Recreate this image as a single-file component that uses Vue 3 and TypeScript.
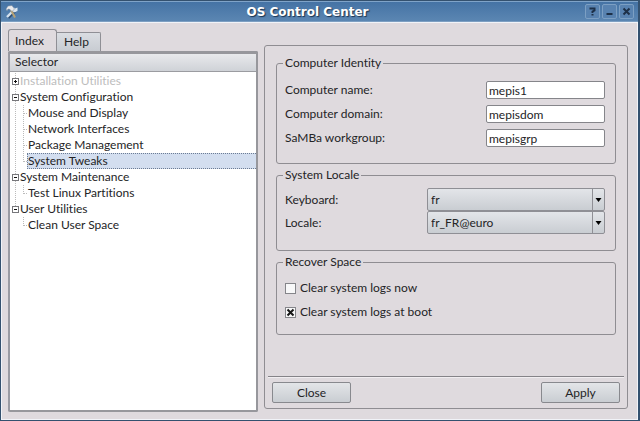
<script setup lang="ts">
import { reactive, ref } from 'vue'

interface TreeGroup {
  name: string
  open: boolean
  disabled?: boolean
  items: string[]
}

const groups = reactive<TreeGroup[]>([
  { name: 'Installation Utilities', open: false, disabled: true, items: [] },
  {
    name: 'System Configuration',
    open: true,
    items: ['Mouse and Display', 'Network Interfaces', 'Package Management', 'System Tweaks'],
  },
  { name: 'System Maintenance', open: true, items: ['Test Linux Partitions'] },
  { name: 'User Utilities', open: true, items: ['Clean User Space'] },
])

const selected = ref('System Tweaks')
const tab = ref('Index')
const tabs = ['Index', 'Help']

const identity = reactive([
  { id: 'name', label: 'Computer name:', value: 'mepis1' },
  { id: 'domain', label: 'Computer domain:', value: 'mepisdom' },
  { id: 'workgroup', label: 'SaMBa workgroup:', value: 'mepisgrp' },
])

const locale = reactive([
  { id: 'keyboard', label: 'Keyboard:', value: 'fr', options: ['fr'] },
  { id: 'locale', label: 'Locale:', value: 'fr_FR@euro', options: ['fr_FR@euro'] },
])

const cleanup = reactive([
  { label: 'Clear system logs now', checked: false },
  { label: 'Clear system logs at boot', checked: true },
])
</script>

<template>
  <div class="window">
    <header class="titlebar">
      <svg class="app-icon" viewBox="0 0 14 14" aria-hidden="true">
        <path d="M3 12.5 L11 4.5" stroke="#2b4d75" stroke-width="3.5" />
        <path d="M2 12 L10 4" stroke="#d5e2ef" stroke-width="2.4" />
        <path d="M8 5 L8.5 2 L10 3.5 L12.5 2.5 L12.5 6 L9.5 7.5Z" fill="#dce7f2" />
        <path d="M6 5 L10 12.5" stroke="#b8a274" stroke-width="2" />
        <path d="M1 4 L3 1 L7 .5 L9.5 4 L7 6.5 L5 4.5 L3 4 L2 6Z" fill="#ebebed" stroke="#6c819b" stroke-width=".5" />
      </svg>
      <h1>OS Control Center</h1>
      <div class="window-buttons">
        <button type="button" aria-label="What's this">
          <svg viewBox="0 0 13 13"><path d="M4.5 4.5 V3.5 H8.5 V5.5 L6.5 6.5 V8 M6.5 9 V10.5" /></svg>
        </button>
        <button type="button" aria-label="Minimize">
          <svg viewBox="0 0 13 13"><path d="M3.5 9 H9.5" /></svg>
        </button>
        <button type="button" aria-label="Close window">
          <svg viewBox="0 0 13 13"><path d="M3.5 3.5 L9.5 9.5 M9.5 3.5 L3.5 9.5" /></svg>
        </button>
      </div>
    </header>

    <main class="content">
      <section class="sidebar">
        <div class="tabs" role="tablist">
          <button
            v-for="t in tabs"
            :key="t"
            type="button"
            role="tab"
            class="tab"
            :class="{ active: tab === t }"
            :aria-selected="tab === t"
            @click="tab = t"
          >{{ t }}</button>
        </div>
        <div class="tree-frame">
          <div class="tree-header">Selector</div>
          <ul class="tree">
            <li v-for="g in groups" :key="g.name" class="group">
              <div class="group-row" :class="{ disabled: g.disabled }">
                <button type="button" class="expander" :aria-label="g.name" :aria-expanded="g.open" @click="g.open = !g.open">
                  <svg viewBox="0 0 7 7" aria-hidden="true">
                    <path d="M2 3.5 H5" />
                    <path v-if="!g.open" d="M3.5 2 V5" />
                  </svg>
                </button>
                <span>{{ g.name }}</span>
              </div>
              <ul v-if="g.open" class="items">
                <li v-for="item in g.items" :key="item">
                  <button type="button" class="item" :class="{ selected: selected === item }" @click="selected = item">{{ item }}</button>
                </li>
              </ul>
            </li>
          </ul>
        </div>
      </section>

      <form class="panel" @submit.prevent>
        <div class="groups">
          <fieldset class="identity">
            <legend>Computer Identity</legend>
            <div v-for="f in identity" :key="f.id" class="field">
              <label :for="f.id">{{ f.label }}</label>
              <input :id="f.id" v-model="f.value" type="text" spellcheck="false" />
            </div>
          </fieldset>

          <fieldset class="locale">
            <legend>System Locale</legend>
            <div v-for="f in locale" :key="f.id" class="field">
              <label :for="f.id">{{ f.label }}</label>
              <div class="combo">
                <select :id="f.id" v-model="f.value">
                  <option v-for="o in f.options" :key="o">{{ o }}</option>
                </select>
                <span class="combo-arrow">
                  <svg viewBox="0 0 7 4" aria-hidden="true"><path d="M0.5 0 H6.5 L3.5 4Z" /></svg>
                </span>
              </div>
            </div>
          </fieldset>

          <fieldset class="cleanup">
            <legend>Recover Space</legend>
            <label v-for="c in cleanup" :key="c.label" class="check">
              <span class="box">
                <input v-model="c.checked" type="checkbox" />
                <svg v-if="c.checked" viewBox="0 0 11 11" aria-hidden="true"><path d="M2.5 2.5 L8.5 8.5 M8.5 2.5 L2.5 8.5" /></svg>
              </span>
              {{ c.label }}
            </label>
          </fieldset>
        </div>

        <footer class="actions">
          <button type="button" class="push">Close</button>
          <button type="submit" class="push">Apply</button>
        </footer>
      </form>
    </main>
  </div>
</template>

<style>
body {
  background: #34567a;
}
</style>

<style scoped>
* {
  box-sizing: border-box;
}

.window {
  display: flex;
  flex-direction: column;
  min-height: 100vh;
  border: 1px solid #34516f;
  border-right-width: 2px;
  background: #dfdade;
  color: #242426;
  font: 12px/16px Lato, "Noto Sans", sans-serif;
  font-variant-ligatures: none;
}

button,
input,
select {
  margin: 0;
  font: inherit;
  font-variant-ligatures: none;
  color: inherit;
}

.titlebar {
  display: grid;
  grid-template-columns: 30px 1fr 54px;
  align-items: center;
  height: 21px;
  padding: 0 4px;
  border-top: 1px solid #7fa3c8;
  border-bottom: 1px solid #7d9fc2;
  background: linear-gradient(#4573a5, #5b86b2);
}

.app-icon {
  width: 14px;
  height: 14px;
}

h1 {
  margin: 0;
  color: #fff;
  font: bold 12px/16px "DejaVu Sans", sans-serif;
  text-align: center;
  text-shadow: 1px 1px 1px #1b3350;
}

.window-buttons {
  display: flex;
  justify-content: flex-end;
  gap: 2px;
}

.window-buttons button {
  display: grid;
  place-items: center;
  width: 15px;
  height: 15px;
  padding: 0;
  border: 1px solid #7c9fc3;
  border-radius: 2px;
  background: #5882b0;
}

.window-buttons svg {
  width: 13px;
  height: 13px;
  fill: none;
  stroke: #1d3048;
  stroke-width: 2;
}

.content {
  display: grid;
  grid-template-columns: 250px 1fr;
  gap: 6px;
  flex: 1;
  padding: 6px 9px 7px 6px;
  border: 1px solid #f1f3f8;
}

.sidebar {
  display: flex;
  flex-direction: column;
}

.tabs {
  display: flex;
  align-items: flex-end;
  height: 22px;
}

.tab {
  min-width: 44px;
  height: 19px;
  padding: 0 7px;
  border: 1px solid #8f8f95;
  border-left: 0;
  border-bottom: 0;
  border-radius: 0 2px 0 0;
  background: linear-gradient(#dadde2, #c8ccd2);
  text-align: left;
}

.tab.active {
  min-width: 49px;
  height: 22px;
  padding: 0 6px;
  border-left: 1px solid #8f8f95;
  border-radius: 3px 3px 0 0;
  background: #dfdade;
}

.tree-frame {
  display: flex;
  flex-direction: column;
  flex: 1;
  border: 2px solid #97979c;
  border-top-width: 3px;
  border-left-color: #9a9ba3;
  border-radius: 2px;
  background: #fff;
}

.tree-header {
  height: 18px;
  padding: 0 5px;
  border-bottom: 1px solid #9b9ca1;
  background: linear-gradient(#e8e9ec, #cfd2d7);
}

.tree,
.items {
  margin: 0;
  padding: 0;
  list-style: none;
}

.tree {
  padding: 1px 0 0 2px;
}

.group {
  background: repeating-linear-gradient(#bbb 0 1px, #fff 1px 2px) 3px 0 / 1px 100% no-repeat;
}

.group:last-child {
  background-size: 1px 8px;
}

.group-row {
  display: flex;
  align-items: center;
  gap: 1px;
  height: 16px;
}

.group-row.disabled span {
  color: #bdbdbd;
}

.expander {
  display: grid;
  width: 7px;
  height: 7px;
  padding: 0;
  border: 0;
  outline: 1px solid #77777b;
  outline-offset: -1px;
  background: #fff;
}

.expander svg {
  width: 7px;
  height: 7px;
  fill: none;
  stroke: #111;
}

.items {
  padding-left: 11px;
}

.items li {
  display: grid;
  grid-template-columns: 4px 1fr;
  align-items: center;
  height: 16px;
  background: repeating-linear-gradient(#bbb 0 1px, #fff 1px 2px) 0 0 / 1px 100% no-repeat;
}

.items li:last-child {
  background-size: 1px 8px;
}

.items li::before {
  content: "";
  border-top: 1px dotted #bbb;
}

.item {
  height: 16px;
  padding: 0;
  border: 1px solid transparent;
  border-right: 0;
  background: none;
  line-height: 14px;
  text-align: left;
}

.item.selected {
  border: 1px dotted #6c7c94;
  border-right: 0;
  background: #d3deef;
}

.panel {
  display: flex;
  flex-direction: column;
  margin: 16px 0 3px;
  padding: 9px 3px 5px;
  border: 1px solid #8f8d92;
  border-radius: 3px;
}

.groups {
  display: flex;
  flex-direction: column;
  gap: 3px;
  flex: 1;
  padding: 0 8px;
}

fieldset {
  min-width: 0;
  margin: 0;
  padding: 0 10px 16px 8px;
  border: 1px solid #8f8d92;
  border-radius: 3px;
}

legend {
  margin-left: -2px;
  padding: 0 2px;
}

.field {
  display: flex;
  align-items: center;
  justify-content: space-between;
  height: 23px;
}

.identity {
  padding-top: 7px;
  padding-bottom: 13px;
}

.identity .field {
  height: 24px;
}

.locale {
  padding-top: 5px;
}

input[type="text"] {
  width: 119px;
  height: 18px;
  padding: 0 2px;
  border: 1px solid #85858a;
  border-radius: 2px;
  background: #fff;
}

.combo {
  position: relative;
  width: 178px;
}

select {
  display: block;
  width: 100%;
  height: 23px;
  padding: 0 16px 0 3px;
  appearance: none;
  border: 1px solid #8f8f95;
  border-radius: 2px;
  background: linear-gradient(#e3e5e9, #c9cdd2);
}

.combo-arrow {
  position: absolute;
  top: 1px;
  right: 1px;
  bottom: 1px;
  display: grid;
  place-items: center;
  width: 12px;
  border-left: 1px solid #8f8f95;
  pointer-events: none;
}

.combo-arrow svg {
  width: 7px;
  height: 4px;
}

.cleanup {
  padding-top: 6px;
  padding-bottom: 10px;
}

.check {
  display: flex;
  align-items: center;
  gap: 4px;
  height: 24px;
}

.box {
  position: relative;
  width: 11px;
  height: 11px;
}

.box input {
  display: block;
  width: 11px;
  height: 11px;
  appearance: none;
  border: 1px solid #85858a;
  background: #f8f8f9;
}

.box svg {
  position: absolute;
  inset: 0;
  fill: none;
  stroke: #161616;
  stroke-width: 2;
  pointer-events: none;
}

.actions {
  display: flex;
  justify-content: space-between;
  padding: 5px 4px 0;
  border-top: 1px solid #858388;
  box-shadow: inset 0 1px #f1eef1;
}

.push {
  width: 79px;
  height: 21px;
  padding: 0;
  border: 1px solid #88898e;
  border-radius: 2px;
  background: linear-gradient(#e3e5e8, #c9cdd2);
}
</style>
